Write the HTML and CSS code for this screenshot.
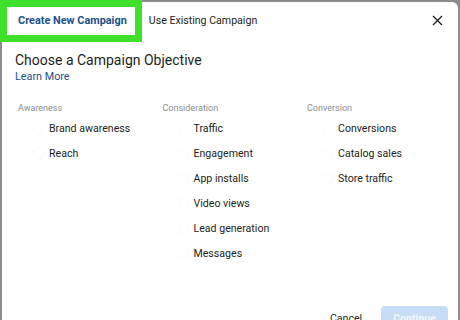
FILE: index.html
```html
<!DOCTYPE html>
<html>
<head>
<meta charset="utf-8">
<link rel="stylesheet" href="styles.css">
</head>
<body>
<div class="dialog">
  <div class="tabs">
    <div class="tab active">Create New Campaign</div>
    <div class="tab">Use Existing Campaign</div>
    <div class="close">
      <svg width="11" height="11" viewBox="0 0 11 11"><path d="M1 1L10 10M10 1L1 10" stroke="#1c1e21" stroke-width="1.3" fill="none"/></svg>
    </div>
  </div>
  <div class="highlight"></div>
  <div class="content">
    <h1 class="title">Choose a Campaign Objective</h1>
    <a class="learn">Learn More</a>
    <div class="columns">
      <div class="col">
        <div class="col-head">Awareness</div>
        <div class="item"><span class="radio"></span>Brand awareness</div>
        <div class="item"><span class="radio"></span>Reach</div>
      </div>
      <div class="col">
        <div class="col-head">Consideration</div>
        <div class="item"><span class="radio"></span>Traffic</div>
        <div class="item"><span class="radio"></span>Engagement</div>
        <div class="item"><span class="radio"></span>App installs</div>
        <div class="item"><span class="radio"></span>Video views</div>
        <div class="item"><span class="radio"></span>Lead generation</div>
        <div class="item"><span class="radio"></span>Messages</div>
      </div>
      <div class="col">
        <div class="col-head">Conversion</div>
        <div class="item"><span class="radio"></span>Conversions</div>
        <div class="item"><span class="radio"></span>Catalog sales</div>
        <div class="item"><span class="radio"></span>Store traffic</div>
      </div>
    </div>
    <div class="footer">
      <span class="cancel">Cancel</span>
      <span class="continue">Continue</span>
    </div>
  </div>
</div>
</body>
</html>
```

FILE: styles.css
```css
html, body {
  margin: 0;
  padding: 0;
  height: 320px;
  overflow: hidden;
  background: #8c8c8c;
  font-family: Roboto, "Liberation Sans", Arial, sans-serif;
  color: #1c1e21;
}
.dialog {
  position: relative;
  margin: 2px 0 0 2px;
  width: 456px;
  height: 330px;
  background: #fff;
  border-radius: 0 6px 0 0;
}
.tabs {
  display: flex;
  align-items: center;
  height: 36px;
  padding: 0 0 0 16px;
  font-size: 10.6px;
}
.tab {
  margin-right: 22px;
  color: #1c1e21;
}
.tab.active {
  color: #1d4f8c;
  font-weight: bold;
  font-size: 10.9px;
}
.close {
  margin-left: auto;
  margin-right: 15px;
  display: flex;
}
.highlight {
  position: absolute;
  left: -2px;
  top: -2px;
  width: 128px;
  height: 28px;
  border: 7px solid #3ee02b;
}
.content {
  padding: 13px 0 0 13px;
}
.title {
  margin: 0;
  font-size: 14px;
  font-weight: normal;
  line-height: 18px;
  color: #1c1e21;
}
.learn {
  display: block;
  font-size: 10.8px;
  line-height: 14px;
  margin-top: 1px;
  color: #1d4f8c;
}
.columns {
  display: grid;
  grid-template-columns: 144.5px 144.5px 144.5px;
  padding: 18px 0 0 3px;
}
.col-head {
  font-size: 9px;
  line-height: 12px;
  color: #8a8d91;
  margin-bottom: 2px;
}
.item {
  display: flex;
  align-items: center;
  height: 25px;
  padding-left: 15px;
  font-size: 10.6px;
}
.radio {
  width: 9px;
  height: 9px;
  border-radius: 50%;
  border: 1px solid #fafafa;
  margin-right: 5px;
}
.footer {
  display: flex;
  justify-content: flex-end;
  align-items: center;
  gap: 19px;
  margin-top: 40px;
  padding-right: 10px;
  font-size: 10.6px;
}
.cancel {
  color: #1c1e21;
}
.continue {
  background: #c7ddf5;
  color: #f2f7fd;
  font-weight: bold;
  border-radius: 4px;
  padding: 6px 12px;
}
```
